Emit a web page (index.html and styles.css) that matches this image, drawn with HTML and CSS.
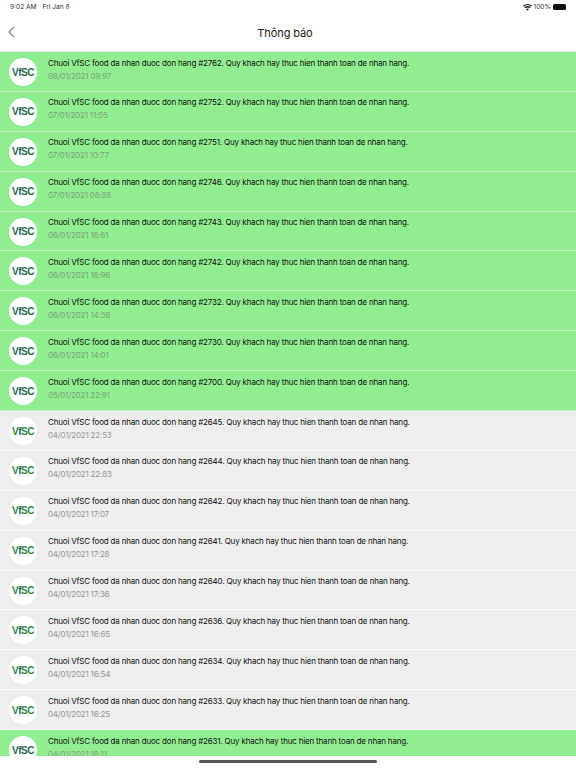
FILE: index.html
```html
<!DOCTYPE html>
<html lang="vi">
<head>
  <meta charset="UTF-8">
  <meta name="viewport" content="width=device-width, initial-scale=1.0">
  <title>Thông báo</title>

  <link rel="stylesheet" href="styles.css">
</head>
<body>
<div class="screen">
  <div class="status-bar">
    <div class="status-left"><span>9:02 AM</span><span>Fri Jan 8</span></div>
    <div class="status-right">
      <svg class="wifi" width="9" height="7" viewBox="0 0 11 8"><path d="M5.5 8 3.7 5.9a2.7 2.7 0 0 1 3.6 0zM2.9 5 1.8 3.8a5.6 5.6 0 0 1 7.4 0L8.1 5a4 4 0 0 0-5.2 0zM1.1 3 0 1.9a8.2 8.2 0 0 1 11 0L9.9 3a6.6 6.6 0 0 0-8.8 0z" fill="#222"/></svg>
      <span>100%</span>
      <span class="battery"></span>
    </div>
  </div>

  <div class="nav-bar">
    <svg class="back" width="7" height="12" viewBox="0 0 7 12"><path d="M6 1 1 6l5 5" fill="none" stroke="#888" stroke-width="1.3"/></svg>
    <h1>Thông báo</h1>
  </div>

  <div class="list">
    <div class="item unread">
      <div class="logo">V<i>f</i>SC</div>
      <div class="item-text"><p>Chuoi VfSC food da nhan duoc don hang #2762. Quy khach hay thuc hien thanh toan de nhan hang.</p><time>08/01/2021 09:97</time></div>
    </div>
    <div class="item unread">
      <div class="logo">V<i>f</i>SC</div>
      <div class="item-text"><p>Chuoi VfSC food da nhan duoc don hang #2752. Quy khach hay thuc hien thanh toan de nhan hang.</p><time>07/01/2021 11:05</time></div>
    </div>
    <div class="item unread">
      <div class="logo">V<i>f</i>SC</div>
      <div class="item-text"><p>Chuoi VfSC food da nhan duoc don hang #2751. Quy khach hay thuc hien thanh toan de nhan hang.</p><time>07/01/2021 10:77</time></div>
    </div>
    <div class="item unread">
      <div class="logo">V<i>f</i>SC</div>
      <div class="item-text"><p>Chuoi VfSC food da nhan duoc don hang #2746. Quy khach hay thuc hien thanh toan de nhan hang.</p><time>07/01/2021 08:88</time></div>
    </div>
    <div class="item unread">
      <div class="logo">V<i>f</i>SC</div>
      <div class="item-text"><p>Chuoi VfSC food da nhan duoc don hang #2743. Quy khach hay thuc hien thanh toan de nhan hang.</p><time>06/01/2021 16:61</time></div>
    </div>
    <div class="item unread">
      <div class="logo">V<i>f</i>SC</div>
      <div class="item-text"><p>Chuoi VfSC food da nhan duoc don hang #2742. Quy khach hay thuc hien thanh toan de nhan hang.</p><time>06/01/2021 16:96</time></div>
    </div>
    <div class="item unread">
      <div class="logo">V<i>f</i>SC</div>
      <div class="item-text"><p>Chuoi VfSC food da nhan duoc don hang #2732. Quy khach hay thuc hien thanh toan de nhan hang.</p><time>06/01/2021 14:36</time></div>
    </div>
    <div class="item unread">
      <div class="logo">V<i>f</i>SC</div>
      <div class="item-text"><p>Chuoi VfSC food da nhan duoc don hang #2730. Quy khach hay thuc hien thanh toan de nhan hang.</p><time>06/01/2021 14:01</time></div>
    </div>
    <div class="item unread">
      <div class="logo">V<i>f</i>SC</div>
      <div class="item-text"><p>Chuoi VfSC food da nhan duoc don hang #2700. Quy khach hay thuc hien thanh toan de nhan hang.</p><time>05/01/2021 22:91</time></div>
    </div>
    <div class="item">
      <div class="logo">V<i>f</i>SC</div>
      <div class="item-text"><p>Chuoi VfSC food da nhan duoc don hang #2645. Quy khach hay thuc hien thanh toan de nhan hang.</p><time>04/01/2021 22:53</time></div>
    </div>
    <div class="item">
      <div class="logo">V<i>f</i>SC</div>
      <div class="item-text"><p>Chuoi VfSC food da nhan duoc don hang #2644. Quy khach hay thuc hien thanh toan de nhan hang.</p><time>04/01/2021 22:83</time></div>
    </div>
    <div class="item">
      <div class="logo">V<i>f</i>SC</div>
      <div class="item-text"><p>Chuoi VfSC food da nhan duoc don hang #2642. Quy khach hay thuc hien thanh toan de nhan hang.</p><time>04/01/2021 17:07</time></div>
    </div>
    <div class="item">
      <div class="logo">V<i>f</i>SC</div>
      <div class="item-text"><p>Chuoi VfSC food da nhan duoc don hang #2641. Quy khach hay thuc hien thanh toan de nhan hang.</p><time>04/01/2021 17:28</time></div>
    </div>
    <div class="item">
      <div class="logo">V<i>f</i>SC</div>
      <div class="item-text"><p>Chuoi VfSC food da nhan duoc don hang #2640. Quy khach hay thuc hien thanh toan de nhan hang.</p><time>04/01/2021 17:36</time></div>
    </div>
    <div class="item">
      <div class="logo">V<i>f</i>SC</div>
      <div class="item-text"><p>Chuoi VfSC food da nhan duoc don hang #2636. Quy khach hay thuc hien thanh toan de nhan hang.</p><time>04/01/2021 16:65</time></div>
    </div>
    <div class="item">
      <div class="logo">V<i>f</i>SC</div>
      <div class="item-text"><p>Chuoi VfSC food da nhan duoc don hang #2634. Quy khach hay thuc hien thanh toan de nhan hang.</p><time>04/01/2021 16:54</time></div>
    </div>
    <div class="item">
      <div class="logo">V<i>f</i>SC</div>
      <div class="item-text"><p>Chuoi VfSC food da nhan duoc don hang #2633. Quy khach hay thuc hien thanh toan de nhan hang.</p><time>04/01/2021 16:25</time></div>
    </div>
    <div class="item unread">
      <div class="logo">V<i>f</i>SC</div>
      <div class="item-text"><p>Chuoi VfSC food da nhan duoc don hang #2631. Quy khach hay thuc hien thanh toan de nhan hang.</p><time>04/01/2021 16:11</time></div>
    </div>
  </div>

  <div class="home-area"><div class="home-bar"></div></div>
</div>
</body>
</html>
```

FILE: styles.css
```css
* {
  box-sizing: border-box;
}
html, body {
  height: 100%;
}
body {
  margin: 0;
  overflow: hidden;
  background: #fff;
  font-family: "Inter", "Liberation Sans", sans-serif;
}
.screen {
  display: flex;
  flex-direction: column;
  height: 768px;
}
.status-bar {
  display: flex;
  justify-content: space-between;
  align-items: center;
  flex: none;
  height: 14px;
  padding: 0 10px;
  font-size: 6.6px;
  color: #333;
}
.status-left {
  display: flex;
  gap: 6px;
}
.status-right {
  display: flex;
  align-items: center;
  gap: 2px;
}
.battery {
  width: 13px;
  height: 6px;
  border-radius: 1.5px;
  background: #111;
}
.nav-bar {
  position: relative;
  display: flex;
  align-items: center;
  justify-content: center;
  flex: none;
  height: 38px;
  padding-right: 6px;
  border-bottom: 1px solid #e4e4e4;
}
.nav-bar h1 {
  margin: 0;
  font-size: 11px;
  font-weight: 400;
  letter-spacing: -0.1px;
  color: #222;
}
.back {
  position: absolute;
  left: 8px;
  top: 12px;
}
.list {
  flex: 1;
  overflow: hidden;
}
.item {
  display: flex;
  align-items: flex-start;
  height: 39.9px;
  padding: 4.5px 0 0 9px;
  background: #eee;
  border-bottom: 1px solid #f8f8f8;
}
.item.unread {
  background: #90ee90;
  border-bottom-color: #c4f5c4;
}
.logo {
  display: flex;
  align-items: center;
  justify-content: center;
  flex: none;
  width: 28px;
  height: 28px;
  margin-top: 1.5px;
  border-radius: 50%;
  background: #fff;
  font-family: "Liberation Sans", sans-serif;
  font-size: 10px;
  font-weight: 700;
  letter-spacing: -0.5px;
  color: #2a8a42;
}
.logo i {
  font-style: normal;
  color: #2a5a6b;
}
.unread .logo {
  color: #1f6f4a;
}
.item-text {
  margin-left: 11px;
  white-space: nowrap;
}
.item-text p {
  margin: 0;
  font-size: 8px;
  line-height: 12px;
  letter-spacing: -0.18px;
  color: #111;
}
.item-text time {
  display: block;
  margin-top: 1px;
  font-size: 8px;
  line-height: 12px;
  letter-spacing: -0.18px;
  color: #999;
}
.unread time {
  color: #7fa57f;
}
.home-area {
  display: flex;
  justify-content: center;
  flex: none;
  height: 12px;
  padding-top: 4px;
  background: #fff;
}
.home-bar {
  width: 178px;
  height: 3px;
  border-radius: 2px;
  background: #555;
}
```
